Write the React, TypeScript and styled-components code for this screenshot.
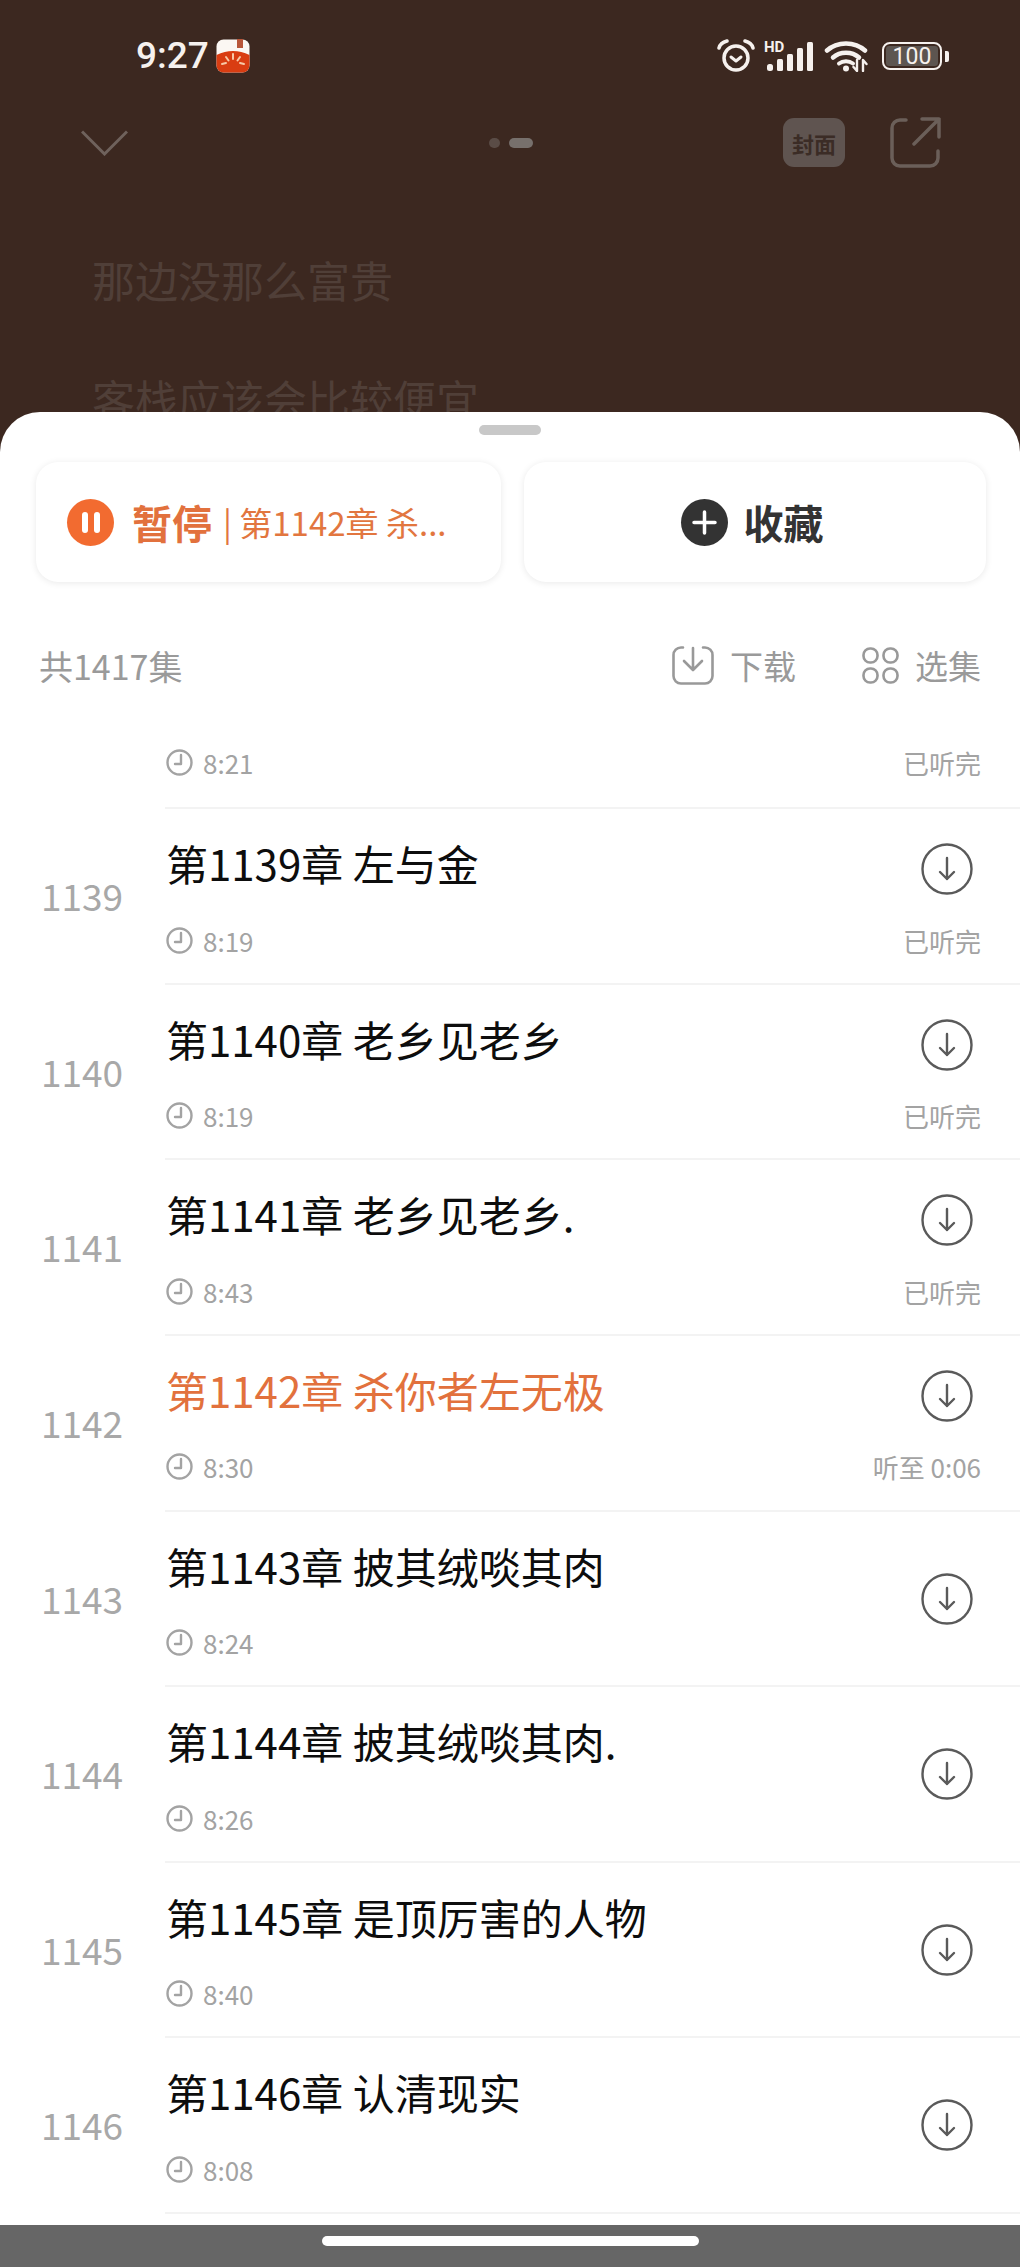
import React from 'react';
import styled, { createGlobalStyle } from 'styled-components';

const CJK = `"Noto Sans CJK SC", "Noto Sans", sans-serif`;

const GlobalStyle = createGlobalStyle`
  html, body {
    margin: 0;
    padding: 0;
    background: #3c2820;
  }
  body {
    font-family: ${CJK};
    overflow: hidden;
  }
  * {
    box-sizing: border-box;
  }
`;

const Page = styled.div`
  display: flex;
  flex-direction: column;
  width: 1020px;
  height: 2267px;
  overflow: hidden;
`;

const Backdrop = styled.div`
  display: flex;
  flex-direction: column;
  height: 412px;
  flex: none;
  overflow: hidden;
  background: #3c2820;
`;

const StatusBar = styled.div`
  display: flex;
  align-items: center;
  justify-content: space-between;
  height: 36px;
  margin-top: 38px;
  padding: 0 71px 0 136px;
`;

const StatusLeft = styled.div`
  display: flex;
  align-items: center;
  gap: 7px;
`;

const Clock = styled.span`
  font-family: Roboto, sans-serif;
  font-size: 37px;
  font-weight: 500;
  line-height: 36px;
  color: #f6f1ee;
`;

const StatusRight = styled.div`
  display: flex;
  align-items: center;
  gap: 11px;
`;

const SignalWrap = styled.div`
  position: relative;
  width: 47px;
  height: 30px;
`;

const HdLabel = styled.span`
  position: absolute;
  left: -2px;
  top: -1px;
  font-family: Roboto, sans-serif;
  font-size: 15px;
  font-weight: 700;
  line-height: 14px;
  color: #f6f1ee;
`;

const Battery = styled.div`
  display: flex;
  align-items: center;
  gap: 3px;
  margin-left: 3px;
`;

const BatteryBody = styled.div`
  width: 60px;
  height: 28px;
  padding: 2px;
  border: 2.5px solid #f6f1ee;
  border-radius: 8px;
`;

const BatteryLevel = styled.div`
  display: flex;
  align-items: center;
  justify-content: center;
  height: 100%;
  border-radius: 3px;
  background: #5d5550;
  font-family: Roboto, sans-serif;
  font-size: 23px;
  line-height: 19px;
  color: #f6f1ee;
`;

const BatteryTip = styled.div`
  width: 4px;
  height: 11px;
  border-radius: 0 2px 2px 0;
  background: #f6f1ee;
`;

const TopBar = styled.div`
  display: grid;
  grid-template-columns: 1fr auto 1fr;
  align-items: center;
  height: 50px;
  margin-top: 43px;
  padding: 0 79px 0 81px;
`;

const Dots = styled.div`
  display: flex;
  align-items: center;
  gap: 9px;
`;

const Dot = styled.span<{ $active?: boolean }>`
  width: ${({ $active }) => ($active ? '24px' : '11px')};
  height: 10px;
  border-radius: 5px;
  background: ${({ $active }) => ($active ? '#77706c' : '#5a4c46')};
`;

const TopActions = styled.div`
  display: flex;
  align-items: center;
  justify-content: flex-end;
  gap: 44px;
`;

const CoverButton = styled.div`
  display: flex;
  align-items: center;
  justify-content: center;
  width: 62px;
  height: 49px;
  border-radius: 11px;
  background: #5f5450;
  font-size: 22px;
  font-weight: 700;
  color: #3b2c26;
`;

const GhostLine = styled.div<{ $gap: number }>`
  flex: none;
  margin-top: ${({ $gap }) => $gap}px;
  padding-left: 92px;
  font-size: 43px;
  line-height: 60px;
  color: #503f38;
`;

const Sheet = styled.div`
  display: flex;
  flex-direction: column;
  flex: 1;
  min-height: 0;
  overflow: hidden;
  border-radius: 40px 40px 0 0;
  background: #fff;
`;

const Handle = styled.div`
  flex: none;
  width: 62px;
  height: 10px;
  margin: 13px auto 0;
  border-radius: 5px;
  background: #c8c8c8;
`;

const CardRow = styled.div`
  display: grid;
  grid-template-columns: 465px 462px;
  gap: 23px;
  flex: none;
  margin-top: 27px;
  padding-left: 36px;
`;

const Card = styled.div<{ $center?: boolean }>`
  display: flex;
  align-items: center;
  justify-content: ${({ $center }) => ($center ? 'center' : 'flex-start')};
  height: 120px;
  padding: ${({ $center }) => ($center ? '0 6px 0 0' : '0 0 0 31px')};
  border-radius: 22px;
  background: #fff;
  box-shadow: 0 1px 7px rgba(0, 0, 0, 0.09);
`;

const PauseCircle = styled.span`
  display: flex;
  align-items: center;
  justify-content: center;
  gap: 6px;
  width: 47px;
  height: 47px;
  border-radius: 50%;
  background: #f26b30;
`;

const PauseBar = styled.span`
  width: 6px;
  height: 21px;
  border-radius: 3px;
  background: #fff;
`;

const PauseLabel = styled.span`
  margin-left: 18px;
  font-size: 40px;
  font-weight: 700;
  line-height: 48px;
  color: #e2713d;
`;

const NowPlaying = styled.span`
  margin-left: 11px;
  font-size: 33px;
  line-height: 48px;
  white-space: nowrap;
  color: #e2763f;
`;

const PlusCircle = styled.span`
  display: flex;
  align-items: center;
  justify-content: center;
  width: 47px;
  height: 47px;
  margin-right: 16px;
  border-radius: 50%;
  background: #333;
`;

const CollectLabel = styled.span`
  font-size: 40px;
  font-weight: 700;
  line-height: 48px;
  color: #333;
`;

const ListToolbar = styled.div`
  display: flex;
  align-items: center;
  flex: none;
  height: 84px;
  margin-top: 41px;
  padding: 0 39px;
  font-size: 33px;
  color: #9a9a9a;
`;

const TotalLabel = styled.span`
  flex: 1;
  font-size: 34px;
`;

const ToolAction = styled.div`
  display: flex;
  align-items: center;
  gap: 16px;
  margin-left: 66px;
`;

const EpisodeList = styled.div`
  display: flex;
  flex-direction: column;
  flex: 1;
  min-height: 0;
  overflow: hidden;
`;

const Row = styled.div<{ $partial?: boolean }>`
  display: flex;
  flex: none;
  height: ${({ $partial }) => ($partial ? '102px' : '175.625px')};
`;

const EpisodeNo = styled.div`
  flex: none;
  width: 165px;
  padding-top: 60px;
  padding-left: 41px;
  font-size: 37px;
  line-height: 52px;
  color: #a8a8a8;
`;

const RowBody = styled.div<{ $partial?: boolean }>`
  display: flex;
  flex-direction: column;
  flex: 1;
  padding: ${({ $partial }) => ($partial ? '37px' : '24px')} 39px 0 1px;
  border-bottom: 2px solid #f3f3f3;
`;

const TitleLine = styled.div`
  display: flex;
  justify-content: space-between;
  height: 60px;
  margin-bottom: 29px;
`;

const Title = styled.div<{ $active?: boolean }>`
  font-size: 42px;
  line-height: 60px;
  white-space: pre;
  color: ${({ $active }) => ($active ? '#e2713d' : '#0d0d0d')};
`;

// no progress text: the icon sits at the middle of the row
const DownloadButton = styled.svg<{ $middle: boolean }>`
  flex: none;
  margin: ${({ $middle }) => ($middle ? '37px' : '10px')} 8px 0 0;
`;

const MetaLine = styled.div`
  display: flex;
  align-items: center;
  justify-content: space-between;
  height: 36px;
  font-size: 26px;
  color: #a3a3a3;
`;

const Duration = styled.div`
  display: flex;
  align-items: center;
  gap: 10px;
`;

const NavBar = styled.div`
  display: flex;
  align-items: center;
  justify-content: center;
  flex: none;
  height: 42px;
  background: #666;
`;

const NavPill = styled.div`
  width: 377px;
  height: 10px;
  margin-top: -10px;
  border-radius: 5px;
  background: #fff;
`;

const episodes = [
  { no: 1139, title: '第1139章 左与金', time: '8:19', status: '已听完' },
  { no: 1140, title: '第1140章 老乡见老乡', time: '8:19', status: '已听完' },
  { no: 1141, title: '第1141章 老乡见老乡.', time: '8:43', status: '已听完' },
  { no: 1142, title: '第1142章 杀你者左无极', time: '8:30', status: '听至 0:06', active: true },
  { no: 1143, title: '第1143章 披其绒啖其肉', time: '8:24', status: '' },
  { no: 1144, title: '第1144章 披其绒啖其肉.', time: '8:26', status: '' },
  { no: 1145, title: '第1145章 是顶厉害的人物', time: '8:40', status: '' },
  { no: 1146, title: '第1146章 认清现实', time: '8:08', status: '' },
];

const AppBadge = () => (
  <svg width="34" height="34" viewBox="0 0 34 34">
    <rect x="0.5" y="0.5" width="33" height="33" rx="7" fill="#fbf7f3" />
    <path d="M0.5 16 Q17 8 33.5 16 V26.5 a7 7 0 0 1 -7 7 H7.5 a7 7 0 0 1 -7 -7 Z" fill="#d93d12" />
    <rect x="21" y="0" width="6" height="9" fill="#b8563a" />
    <path d="M17 15v5M10 18l2.5 3.5M24 18l-2.5 3.5M6 25l4-1M28 25l-4-1" stroke="#f7c9a8" strokeWidth="2" strokeLinecap="round" />
  </svg>
);

const AlarmIcon = () => (
  <svg width="38" height="34" viewBox="0 0 38 34" fill="none" stroke="#f6f1ee">
    <circle cx="19" cy="19" r="12" strokeWidth="3.5" />
    <path d="M14 18l5 4 5-4" strokeWidth="3" strokeLinecap="round" strokeLinejoin="round" />
    <path d="M2 9c1-4 4-6 8-7M36 9c-1-4-4-6-8-7" strokeWidth="3.5" strokeLinecap="round" />
  </svg>
);

const SignalBars = () => (
  <svg width="47" height="30" viewBox="0 0 47 30" style={{ position: 'absolute', left: 0, top: 0 }}>
    <rect x="1" y="23" width="6" height="7" rx="2.5" fill="#f6f1ee" />
    <rect x="11" y="18" width="6" height="12" rx="1.5" fill="#f6f1ee" />
    <rect x="21" y="13" width="6" height="17" rx="1.5" fill="#f6f1ee" />
    <rect x="31" y="7" width="6" height="23" rx="1.5" fill="#f6f1ee" />
    <rect x="41" y="1" width="6" height="29" rx="1.5" fill="#f6f1ee" />
  </svg>
);

const WifiIcon = () => (
  <svg width="44" height="32" viewBox="0 0 44 32" fill="none" stroke="#f6f1ee" strokeLinecap="round">
    <path d="M3 10.5C13 1 31 1 41 10.5" strokeWidth="4.5" />
    <path d="M9 17.5c7-6.5 19-6.5 26 0" strokeWidth="4.5" />
    <path d="M15 23.5c4-3 10-3 14 0" strokeWidth="4" />
    <circle cx="22" cy="28.5" r="3" fill="#f6f1ee" stroke="none" />
    <path d="M33 20v11l-3.5-4M39 31V20l3.5 4" strokeWidth="2.4" strokeLinejoin="round" />
  </svg>
);

const ChevronIcon = () => (
  <svg width="47" height="26" viewBox="0 0 47 26" fill="none">
    <path d="M1 1.5L23.5 24 46 1.5" stroke="#6f625c" strokeWidth="3" />
  </svg>
);

const ShareIcon = () => (
  <svg width="52" height="51" viewBox="0 0 52 51" fill="none" stroke="#6b5f59" strokeWidth="3.5" strokeLinecap="round" strokeLinejoin="round">
    <path d="M17 3H11a8 8 0 0 0-8 8v30a8 8 0 0 0 8 8h30a8 8 0 0 0 8-8v-7" />
    <path d="M25 27L50 2M33 2h17v18" />
  </svg>
);

const PlusIcon = () => (
  <svg width="25" height="25" viewBox="0 0 25 25">
    <path d="M12.5 2v21M2 12.5h21" stroke="#fff" strokeWidth="3.5" strokeLinecap="round" />
  </svg>
);

const TrayDownloadIcon = () => (
  <svg width="42" height="39" viewBox="0 0 42 39" fill="none" stroke="#999" strokeWidth="2.6" strokeLinecap="round" strokeLinejoin="round">
    <path d="M11 1.5H9a7.5 7.5 0 0 0-7.5 7.5v21A7.5 7.5 0 0 0 9 37.5h24a7.5 7.5 0 0 0 7.5-7.5V9A7.5 7.5 0 0 0 33 1.5h-2" />
    <path d="M21 2v21M12 15l9 9 9-9" />
  </svg>
);

const GridIcon = () => (
  <svg width="37" height="37" viewBox="0 0 37 37" fill="none" stroke="#999" strokeWidth="2.6">
    <rect x="1.5" y="1.5" width="14" height="14" rx="6.5" />
    <rect x="21.5" y="1.5" width="14" height="14" rx="6.5" />
    <rect x="1.5" y="21.5" width="14" height="14" rx="6.5" />
    <rect x="21.5" y="21.5" width="14" height="14" rx="6.5" />
  </svg>
);

const ClockIcon = () => (
  <svg width="27" height="27" viewBox="0 0 27 27" fill="none" stroke="#a3a3a3" strokeWidth="2.4" strokeLinecap="round" strokeLinejoin="round">
    <circle cx="13.5" cy="13.5" r="12" />
    <path d="M15 6v9H9" />
  </svg>
);

const CircleDownloadIcon = ({ middle }: { middle: boolean }) => (
  <DownloadButton $middle={middle} width="52" height="52" viewBox="0 0 52 52" fill="none" stroke="#5a5a5a" strokeWidth="2.4" strokeLinecap="round" strokeLinejoin="round">
    <circle cx="26" cy="26" r="24.5" />
    <path d="M26 15v21M19 29l7 7 7-7" />
  </DownloadButton>
);

const App: React.FC = () => {
  return (
    <Page>
      <GlobalStyle />
      <Backdrop>
        <StatusBar>
          <StatusLeft>
            <Clock>9:27</Clock>
            <AppBadge />
          </StatusLeft>
          <StatusRight>
            <AlarmIcon />
            <SignalWrap>
              <SignalBars />
              <HdLabel>HD</HdLabel>
            </SignalWrap>
            <WifiIcon />
            <Battery>
              <BatteryBody>
                <BatteryLevel>100</BatteryLevel>
              </BatteryBody>
              <BatteryTip />
            </Battery>
          </StatusRight>
        </StatusBar>
        <TopBar>
          <ChevronIcon />
          <Dots>
            <Dot />
            <Dot $active />
          </Dots>
          <TopActions>
            <CoverButton>封面</CoverButton>
            <ShareIcon />
          </TopActions>
        </TopBar>
        <GhostLine $gap={82}>那边没那么富贵</GhostLine>
        <GhostLine $gap={59}>客栈应该会比较便宜</GhostLine>
      </Backdrop>

      <Sheet>
        <Handle />
        <CardRow>
          <Card>
            <PauseCircle>
              <PauseBar />
              <PauseBar />
            </PauseCircle>
            <PauseLabel>暂停</PauseLabel>
            <NowPlaying>| 第1142章 杀...</NowPlaying>
          </Card>
          <Card $center>
            <PlusCircle>
              <PlusIcon />
            </PlusCircle>
            <CollectLabel>收藏</CollectLabel>
          </Card>
        </CardRow>

        <ListToolbar>
          <TotalLabel>共1417集</TotalLabel>
          <ToolAction>
            <TrayDownloadIcon />
            下载
          </ToolAction>
          <ToolAction>
            <GridIcon />
            选集
          </ToolAction>
        </ListToolbar>

        <EpisodeList>
          <Row $partial>
            <EpisodeNo />
            <RowBody $partial>
              <MetaLine>
                <Duration>
                  <ClockIcon />
                  8:21
                </Duration>
                已听完
              </MetaLine>
            </RowBody>
          </Row>
          {episodes.map((ep) => (
            <Row key={ep.no}>
              <EpisodeNo>{ep.no}</EpisodeNo>
              <RowBody>
                <TitleLine>
                  <Title $active={ep.active}>{ep.title}</Title>
                  <CircleDownloadIcon middle={!ep.status} />
                </TitleLine>
                <MetaLine>
                  <Duration>
                    <ClockIcon />
                    {ep.time}
                  </Duration>
                  {ep.status}
                </MetaLine>
              </RowBody>
            </Row>
          ))}
        </EpisodeList>
      </Sheet>

      <NavBar>
        <NavPill />
      </NavBar>
    </Page>
  );
};

export default App;
